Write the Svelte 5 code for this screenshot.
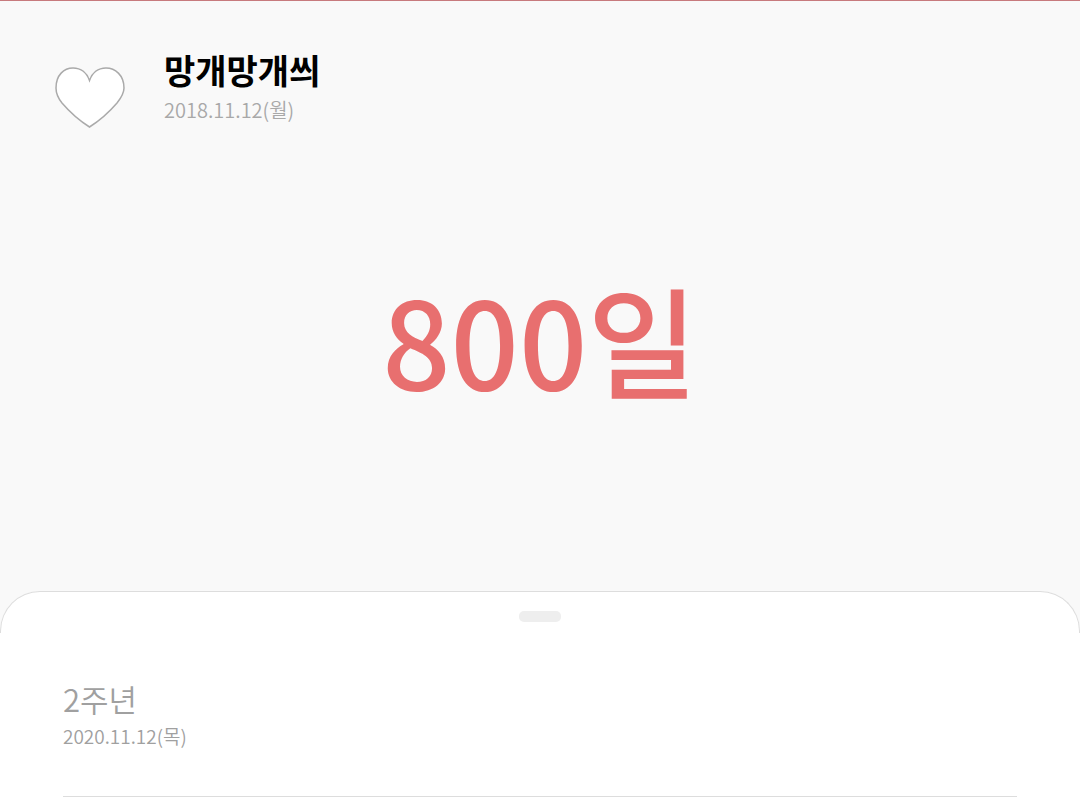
<script lang="ts">
  interface Anniversary {
    title: string;
    date: string;
  }

  const couple: string = '망개망개씌';
  const startDate: string = '2018.11.12(월)';
  const days: number = 800;

  const anniversaries: Anniversary[] = [
    { title: '2주년', date: '2020.11.12(목)' }
  ];
</script>

<main class="screen">
  <header class="profile">
    <svg class="heart" viewBox="0 0 70 62" aria-hidden="true">
      <path d="M34.5 61 C25 55 13 44 7 37 C3 32 1 28 1 22 C1 9 9 2 18 2 C26 2 32 7 34.5 14.5 C37 7 43 2 51 2 C60 2 69 9 69 22 C69 28 66 32 62 37 C56 44 44 55 34.5 61 Z" />
    </svg>
    <div>
      <h1 class="name">{couple}</h1>
      <p class="start">{startDate}</p>
    </div>
  </header>

  <section class="counter">
    <p class="days">{days}일</p>
  </section>

  <section class="sheet">
    <div class="grip">
      <div class="handle"></div>
    </div>
    <ul class="list">
      {#each anniversaries as item}
        <li class="item">
          <h2 class="title">{item.title}</h2>
          <p class="date">{item.date}</p>
        </li>
      {/each}
    </ul>
  </section>
</main>

<style>
  :global(body) {
    margin: 0;
    background: #f9f9f9;
  }

  h1, h2, p, ul {
    margin: 0;
    padding: 0;
  }

  .screen {
    display: flex;
    flex-direction: column;
    min-height: 100vh;
    box-sizing: border-box;
    border-top: 1px solid #c77a7d;
    background: #f9f9f9;
    font-family: "Noto Sans CJK KR", sans-serif;
  }

  .profile {
    display: flex;
    gap: 39px;
    padding: 47px 55px 0;
  }

  .heart {
    width: 70px;
    height: 62px;
    margin-top: 18px;
    fill: #fff;
    stroke: #aaa;
    stroke-width: 1.5;
  }

  .name {
    font-size: 34px;
    line-height: 44px;
    font-weight: 700;
    color: #000;
  }

  .start {
    font-size: 20px;
    line-height: 36px;
    font-weight: 350;
    color: #a8a8a8;
  }

  .counter {
    flex: 1;
    display: flex;
    align-items: center;
    justify-content: center;
    padding-bottom: 44px;
  }

  .days {
    font-size: 120px;
    line-height: 160px;
    font-weight: 500;
    color: #e86f6f;
  }

  .sheet {
    border-radius: 40px 40px 0 0;
    background: #fff;
  }

  .grip {
    height: 22px;
    padding-top: 19px;
    border: 1px solid #ddd;
    border-bottom: 0;
    border-radius: 40px 40px 0 0;
  }

  .handle {
    width: 42px;
    height: 11px;
    margin: 0 auto;
    border-radius: 5px;
    background: #eee;
  }

  .list {
    padding: 0 63px 13px;
    list-style: none;
  }

  .item {
    padding: 44px 0 45px;
    border-bottom: 1px solid #ddd;
  }

  .title {
    font-size: 31px;
    line-height: 44px;
    font-weight: 350;
    color: #a0a0a0;
  }

  .date {
    font-size: 19px;
    line-height: 30px;
    font-weight: 350;
    color: #a0a0a0;
  }
</style>
